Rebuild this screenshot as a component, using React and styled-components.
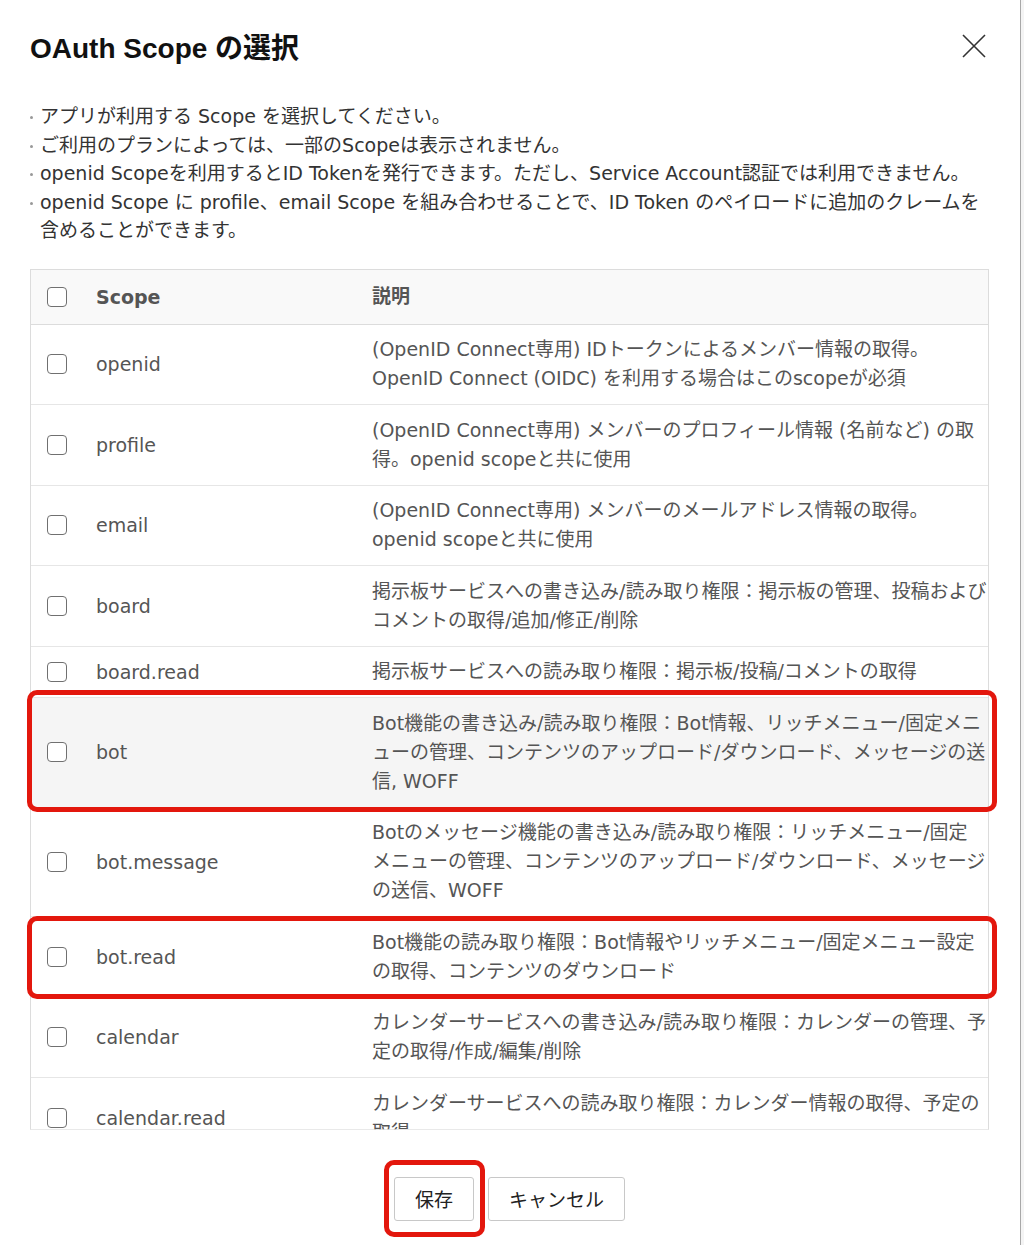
import React from 'react';
import styled, { createGlobalStyle } from 'styled-components';

const GlobalStyle = createGlobalStyle`
  html, body {
    margin: 0;
    padding: 0;
    background: #fff;
  }
  body {
    font-family: "DejaVu Sans", "Noto Sans CJK JP", sans-serif;
    color: #333;
  }
`;

const Page = styled.div`
  display: flex;
  width: 1024px;
  height: 1245px;
  overflow: hidden;
`;

const Modal = styled.div`
  width: 1020px;
  flex: none;
  box-sizing: border-box;
  padding: 25px 31px 0 30px;
  background: #fff;
`;

const EdgeStrip = styled.div`
  flex: 1;
  border-left: 1px solid #a8a8a8;
  background: #f4f4f4;
`;

const Header = styled.div`
  display: flex;
  align-items: center;
  justify-content: space-between;
  height: 42px;
`;

const Title = styled.h2`
  margin: 0;
  font-family: "Liberation Sans", "Noto Sans CJK JP", sans-serif;
  font-size: 28px;
  font-weight: 700;
  color: #111;
`;

const CloseButton = styled.button`
  border: none;
  background: none;
  padding: 0;
  margin-right: 2px;
  width: 26px;
  height: 26px;
  cursor: pointer;
  display: flex;
`;

const Notes = styled.ul`
  list-style: none;
  margin: 35px 0 0;
  padding: 0;
  font-size: 19px;
  line-height: 28.5px;
  color: #333;
`;

const Note = styled.li`
  display: flex;
`;

const Bullet = styled.span`
  flex: none;
  width: 10px;
  display: flex;
  align-items: center;
  height: 28.5px;

  &::before {
    content: '';
    width: 3px;
    height: 3px;
    border-radius: 50%;
    background: #999;
    margin-top: 3px;
  }
`;

const TableBox = styled.div`
  position: relative;
  margin-top: 24px;
  height: 861px;
  box-sizing: border-box;
  border: 1px solid #dcdcdc;
  clip-path: inset(-20px -20px 0 -20px);

  &::after {
    content: '';
    position: absolute;
    left: -1px;
    right: -1px;
    bottom: -1px;
    height: 1px;
    background: #dcdcdc;
    z-index: 3;
  }
`;

const Row = styled.div`
  position: relative;
  display: grid;
  grid-template-columns: 65px 276px 1fr;
  align-items: center;
  padding: ${p => (p.$head ? '0' : '10.75px 0')};
  min-height: ${p => (p.$head ? '54px' : 'auto')};
  background: ${p => (p.$head ? '#f9f9f9' : p.$shaded ? '#f5f5f5' : '#fff')};
  border-bottom: 1px solid ${p => (p.$head ? '#dcdcdc' : '#e6e6e6')};
`;

const Mark = styled.div`
  position: absolute;
  left: -4px;
  right: -9px;
  top: ${p => p.$top}px;
  bottom: ${p => p.$bottom}px;
  border: 5px solid #e3170d;
  border-radius: 10px;
  pointer-events: none;
  z-index: 2;
`;

const CheckCell = styled.div`
  padding-left: 16px;
  display: flex;
`;

const Checkbox = styled.span`
  display: block;
  width: 20px;
  height: 20px;
  box-sizing: border-box;
  border: 1.5px solid #707070;
  border-radius: 4px;
  background: #fff;
`;

const ScopeName = styled.div`
  font-size: 19px;
  color: #555;
  font-weight: ${p => (p.$head ? 700 : 400)};
`;

const Desc = styled.div`
  font-size: 19px;
  line-height: 29px;
  color: #555;
  font-weight: ${p => (p.$head ? 700 : 400)};
`;

const Line = styled.span`
  display: block;
  white-space: nowrap;
`;

const Footer = styled.div`
  display: flex;
  justify-content: center;
  gap: 14px;
  margin-top: 47px;
`;

const ButtonWrap = styled.div`
  position: relative;
  display: flex;
`;

const Button = styled.button`
  height: 44px;
  padding: 0 20px;
  border: 1px solid #c8c8c8;
  border-radius: 3px;
  background: #fff;
  color: #222;
  font-family: "DejaVu Sans", "Noto Sans CJK JP", sans-serif;
  font-size: 19px;
  cursor: pointer;
`;

const ButtonMark = styled.div`
  position: absolute;
  left: -10px;
  right: -11px;
  top: -17px;
  bottom: -16px;
  border: 5px solid #e3170d;
  border-radius: 10px;
  pointer-events: none;
`;

const scopes = [
  {
    name: 'openid',
    lines: [
      '(OpenID Connect専用) IDトークンによるメンバー情報の取得。',
      'OpenID Connect (OIDC) を利用する場合はこのscopeが必須',
    ],
  },
  {
    name: 'profile',
    lines: [
      '(OpenID Connect専用) メンバーのプロフィール情報 (名前など) の取',
      '得。openid scopeと共に使用',
    ],
  },
  {
    name: 'email',
    lines: [
      '(OpenID Connect専用) メンバーのメールアドレス情報の取得。',
      'openid scopeと共に使用',
    ],
  },
  {
    name: 'board',
    lines: [
      '掲示板サービスへの書き込み/読み取り権限：掲示板の管理、投稿および',
      'コメントの取得/追加/修正/削除',
    ],
  },
  {
    name: 'board.read',
    lines: ['掲示板サービスへの読み取り権限：掲示板/投稿/コメントの取得'],
  },
  {
    name: 'bot',
    shaded: true,
    mark: { top: -8, bottom: -5 },
    lines: [
      'Bot機能の書き込み/読み取り権限：Bot情報、リッチメニュー/固定メニ',
      'ューの管理、コンテンツのアップロード/ダウンロード、メッセージの送',
      '信, WOFF',
    ],
  },
  {
    name: 'bot.message',
    lines: [
      'Botのメッセージ機能の書き込み/読み取り権限：リッチメニュー/固定',
      'メニューの管理、コンテンツのアップロード/ダウンロード、メッセージ',
      'の送信、WOFF',
    ],
  },
  {
    name: 'bot.read',
    mark: { top: -1, bottom: -2 },
    lines: [
      'Bot機能の読み取り権限：Bot情報やリッチメニュー/固定メニュー設定',
      'の取得、コンテンツのダウンロード',
    ],
  },
  {
    name: 'calendar',
    lines: [
      'カレンダーサービスへの書き込み/読み取り権限：カレンダーの管理、予',
      '定の取得/作成/編集/削除',
    ],
  },
  {
    name: 'calendar.read',
    lines: [
      'カレンダーサービスへの読み取り権限：カレンダー情報の取得、予定の',
      '取得',
    ],
  },
];

const notes = [
  ['アプリが利用する Scope を選択してください。'],
  ['ご利用のプランによっては、一部のScopeは表示されません。'],
  ['openid Scopeを利用するとID Tokenを発行できます。ただし、Service Account認証では利用できません。'],
  [
    'openid Scope に profile、email Scope を組み合わせることで、ID Token のペイロードに追加のクレームを',
    '含めることができます。',
  ],
];

const CloseIcon = () => (
  <svg width="26" height="26" viewBox="0 0 26 26">
    <path d="M2 2 L24 24 M24 2 L2 24" stroke="#333" strokeWidth="1.6" fill="none" />
  </svg>
);

export default function App() {
  return (
    <Page>
      <GlobalStyle />
      <Modal>
        <Header>
          <Title>OAuth Scope の選択</Title>
          <CloseButton aria-label="close">
            <CloseIcon />
          </CloseButton>
        </Header>

        <Notes>
          {notes.map((n, i) => (
            <Note key={i}>
              <Bullet />
              <span>
                {n.map((l, j) => (
                  <Line key={j}>{l}</Line>
                ))}
              </span>
            </Note>
          ))}
        </Notes>

        <TableBox>
          <Row $head>
            <CheckCell>
              <Checkbox />
            </CheckCell>
            <ScopeName $head>Scope</ScopeName>
            <Desc $head>説明</Desc>
          </Row>
          {scopes.map(s => (
            <Row key={s.name} $shaded={s.shaded}>
              <CheckCell>
                <Checkbox />
              </CheckCell>
              <ScopeName>{s.name}</ScopeName>
              <Desc>
                {s.lines.map((l, i) => (
                  <Line key={i}>{l}</Line>
                ))}
              </Desc>
              {s.mark && <Mark $top={s.mark.top} $bottom={s.mark.bottom} />}
            </Row>
          ))}
        </TableBox>

        <Footer>
          <ButtonWrap>
            <Button>保存</Button>
            <ButtonMark />
          </ButtonWrap>
          <ButtonWrap>
            <Button>キャンセル</Button>
          </ButtonWrap>
        </Footer>
      </Modal>
      <EdgeStrip />
    </Page>
  );
}
